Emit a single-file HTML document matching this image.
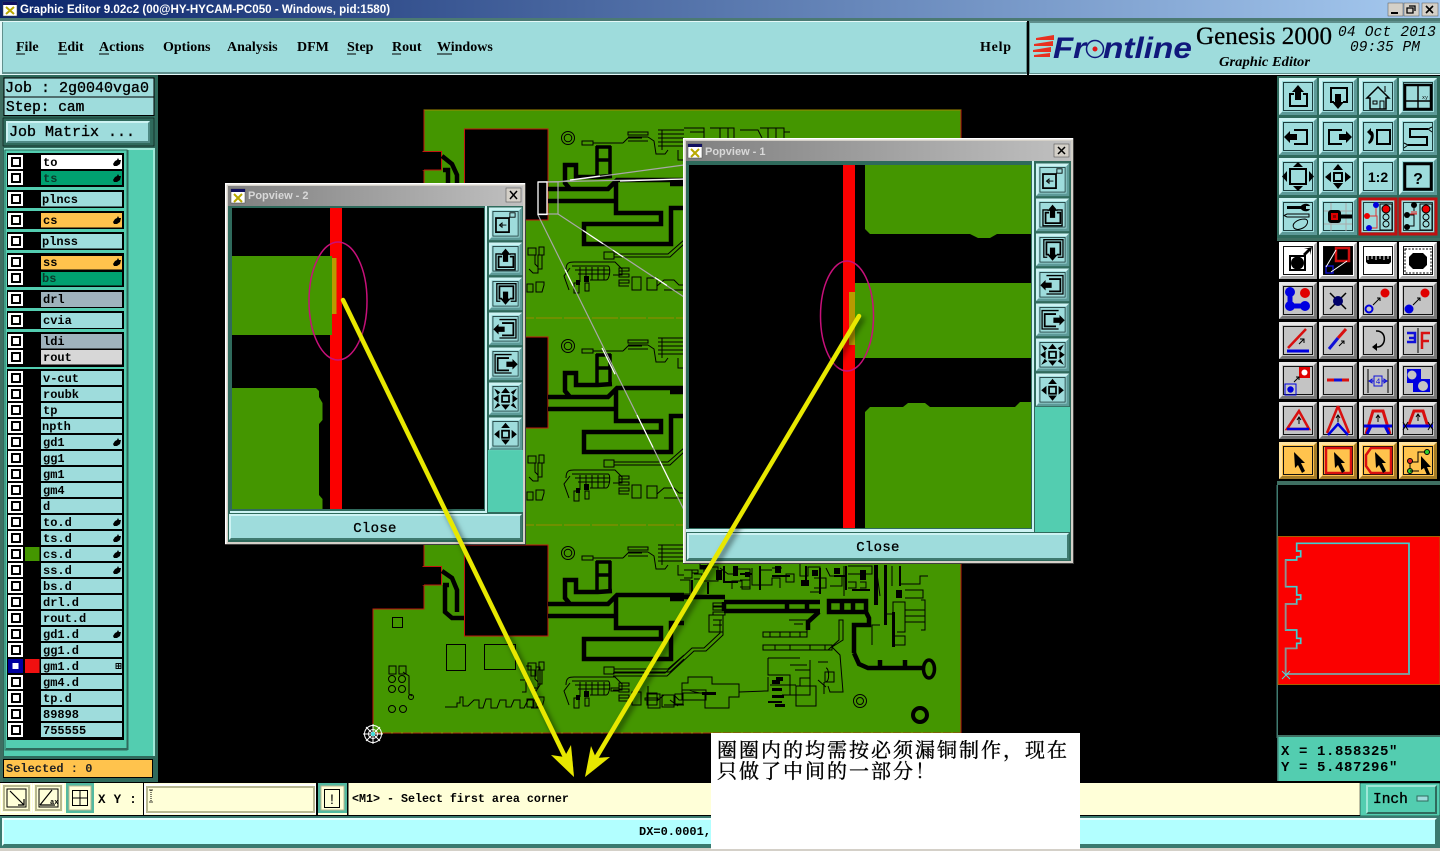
<!DOCTYPE html>
<html><head><meta charset="utf-8"><title>Graphic Editor</title>
<style>
html,body{margin:0;padding:0;background:#000;width:1440px;height:851px;overflow:hidden}
svg{display:block;position:absolute;left:0;top:0}
.m{font-family:"Liberation Mono",monospace;font-weight:bold;fill:#000}
.l{font-size:12px}
.s{font-family:"Liberation Serif",serif;font-weight:bold;font-size:14px;fill:#000}
.t{font-family:"Liberation Sans",sans-serif;font-weight:bold;font-size:11px}
.n{font-family:"Liberation Serif","Noto Serif CJK SC",serif;font-size:20px;letter-spacing:2px;fill:#000;stroke:#000;stroke-width:.35}
.k{fill:none;stroke:#000;stroke-width:2}
.th{fill:none;stroke:#000;stroke-width:4.5;stroke-linejoin:miter}
.tn{fill:none;stroke:#000;stroke-width:1}
</style></head><body>
<svg width="1440" height="851" viewBox="0 0 1440 851" xmlns="http://www.w3.org/2000/svg">
<defs>
<linearGradient id="tb" x1="0" x2="1" y1="0" y2="0"><stop offset="0" stop-color="#0a246a"/><stop offset="1" stop-color="#a6caf0"/></linearGradient>
<linearGradient id="tg" x1="0" x2="1" y1="0" y2="0"><stop offset="0" stop-color="#808080"/><stop offset="1" stop-color="#c0c0c0"/></linearGradient>
<filter id="sh" x="-10%" y="-10%" width="120%" height="120%"><feDropShadow dx="3" dy="3" stdDeviation="3" flood-color="#000" flood-opacity=".55"/></filter>

<g id="cb"><rect width="15" height="14" fill="#fff"/><rect x="3" y="2" width="10" height="10" fill="#000"/><rect x="5" y="4" width="6" height="6" fill="#fff"/></g>
<path id="hand" d="M0 6L2 3L4 2L5 0L6 2H8L7 6L4 8H1Z" fill="#000"/>

<g id="bT"><rect width="38" height="37" fill="#cdf3f3"/><path d="M38 0V37H0L3 34H35V3Z" fill="#5d9a98"/><rect x="3" y="3" width="32" height="31" fill="#9edcdc"/><rect x="4.5" y="4.5" width="29" height="28" fill="none" stroke="#1d3d3d"/></g>
<g id="bW"><rect width="38" height="37" fill="#fff"/><path d="M38 0V37H0L3 34H35V3Z" fill="#a8a8a8"/><rect x="3" y="3" width="32" height="31" fill="#fff"/><rect x="4.5" y="4.5" width="29" height="28" fill="none" stroke="#111"/></g>
<g id="bG"><rect width="38" height="37" fill="#e8e8e8"/><path d="M38 0V37H0L3 34H35V3Z" fill="#777"/><rect x="3" y="3" width="32" height="31" fill="#c4c4c4"/><rect x="4.5" y="4.5" width="29" height="28" fill="none" stroke="#111"/></g>
<g id="bO"><rect width="38" height="37" fill="#ffe3a0"/><path d="M38 0V37H0L3 34H35V3Z" fill="#a47c28"/><rect x="3" y="3" width="32" height="31" fill="#ffc34d"/><rect x="4.5" y="4.5" width="29" height="28" fill="none" stroke="#111"/></g>

<g id="iUp"><path class="k" d="M15 16H11V28H28V16H24"/><path d="M19 7L25 14H22V22H16V14H13Z"/></g>
<g id="iDn"><path class="k" d="M15 24H12V10H28V24H24"/><path d="M16 16H22V24H25L19 31L13 24H16Z"/></g>
<g id="iHm"><path d="M19 9L8 20H11V31H27V20H30Z" fill="none" stroke="#000" stroke-width="1.5"/><path class="tn" d="M14 23h4v3h-4zM21 23h4v8h-4zM26 8v6"/></g>
<g id="iWn"><rect x="6" y="7" width="26" height="24" fill="none" stroke="#000" stroke-width="2.5"/><path d="M19 7V31M6 23H32" stroke="#000" stroke-width="1.4"/><text x="23" y="21" font-size="5" font-family="Liberation Mono">xy</text></g>
<g id="iLf"><path class="k" d="M15 12H28V26H15"/><path d="M5 19L11 13V16H18V22H11V25Z"/></g>
<g id="iRt"><path class="k" d="M23 12H10V26H23"/><path d="M33 19L27 13V16H20V22H27V25Z"/></g>
<g id="iBk"><rect x="18" y="12" width="13" height="14" class="k"/><path d="M8 14L12 10V13C16 13 16 24 10 26L9 24C12 22 12 16 12 16V18Z"/></g>
<g id="iS"><path class="k" d="M29 11H11V19H28V27H9"/><path class="tn" d="M33 9L29 11L33 14M5 25L9 27L5 30"/></g>
<g id="iEx"><rect x="11" y="11" width="16" height="15" class="k"/><path d="M19 4L24 9H14ZM19 33L24 28H14ZM3 18.5L8 13V24ZM35 18.5L30 13V24Z"/></g>
<g id="iSh"><rect x="15" y="15" width="8" height="8" class="k"/><path d="M19 6L24 12H14ZM19 31L24 25H14ZM6 19L12 14V24ZM32 19L26 14V24Z"/></g>
<g id="iEp"><rect x="15" y="15" width="8" height="7" class="k"/><path d="M6 7L13 11L10 14ZM32 7L25 11L28 14ZM6 30L13 26L10 23ZM32 30L25 26L28 23ZM19 6L24 12H14ZM19 31L24 25H14ZM5 18.500L11 14V23ZM33 18.500L27 14V23Z"/></g>
<g id="i12"><text x="19" y="24" text-anchor="middle" font-family="Liberation Sans" font-weight="bold" font-size="14">1:2</text></g>
<g id="iQ"><rect x="6" y="6" width="26" height="25" fill="none" stroke="#000" stroke-width="2.5"/><text x="19" y="26" text-anchor="middle" font-family="Liberation Sans" font-weight="bold" font-size="16">?</text></g>
<g id="iTl"><path d="M8 8H22C24 5 30 5 31 8H27V11H31C30 14 24 14 22 11H8Z"/><path class="tn" d="M8 16H30V19H8L5 17.5ZM15 30C12 26 18 21 26 21C31 22 28 28 24 30C20 32 17 32 15 30Z"/></g>
<g id="iKy"><path d="M5 13H33M5 26H33M12 5V33M27 5V33" stroke="#aaa" fill="none"/><rect x="9" y="12" width="13" height="13" rx="3"/><rect x="12" y="15" width="7" height="7" fill="#d00"/><rect x="14" y="17" width="3" height="3" fill="#800"/><rect x="20" y="16.5" width="13" height="4"/></g>
<g id="iSa"><rect x="1" y="1" width="36" height="35" fill="none" stroke="#c01010" stroke-width="3"/><rect x="21" y="6" width="12" height="26" fill="none" stroke="#000"/><circle cx="27" cy="11" r="4" fill="#e00" stroke="#000"/><circle cx="27" cy="19" r="3" fill="none" stroke="#000"/><circle cx="27" cy="26" r="3" fill="none" stroke="#000"/><path d="M17 8V18H8M8 18H18V30H10" fill="none" stroke="#e03030"/><circle cx="17" cy="7" r="3" fill="#00d"/><circle cx="8" cy="18" r="3" fill="#e00"/><circle cx="10" cy="30" r="3" fill="#00d"/></g>
<g id="iSb"><rect x="1" y="1" width="36" height="35" fill="none" stroke="#c01010" stroke-width="3"/><rect x="21" y="6" width="12" height="26" fill="none" stroke="#000"/><circle cx="27" cy="11" r="4" fill="#e00" stroke="#000"/><circle cx="27" cy="19" r="3" fill="none" stroke="#000"/><circle cx="27" cy="26" r="3" fill="none" stroke="#000"/><path d="M15 8V28H8M8 17H15" fill="none" stroke="#000"/><path d="M11 16h7M13 13v3M15 13v3M17 13v3" stroke="#d22" fill="none"/><circle cx="15" cy="7" r="3"/><circle cx="8" cy="17" r="3"/><circle cx="8" cy="29" r="3"/></g>

<g id="a1"><rect x="11" y="14" width="15" height="14" class="k"/><circle cx="18.5" cy="21" r="6.5"/><path d="M24 12L29 7H25L33 5L31 13V9L26 14" /></g>
<g id="a2"><rect x="4.5" y="4.5" width="29" height="28" fill="#000"/><rect x="17" y="6" width="13" height="13" fill="none" stroke="#d01010" stroke-width="2.5"/><rect x="7" y="24" width="7" height="7" fill="none" stroke="#1010c0" stroke-width="1.5"/><path d="M7 25L17 8M12 30L28 19" stroke="#fff" fill="none"/></g>
<g id="a3"><path d="M7 14H32V20L30 22H9L7 20Z"/><path d="M9 13v5M13 13v4M17 13v5M21 13v4M25 13v5M29 13v4" stroke="#fff"/></g>
<g id="a4"><rect x="6" y="7" width="26" height="24" fill="none" stroke="#000" stroke-dasharray="2 1.5"/><path d="M14 11H24L28 15V23L24 27H14L10 23V15Z"/></g>
<g id="b1"><path d="M11 10V24H26" stroke="#0000e0" stroke-width="5" fill="none"/><circle cx="11" cy="10" r="5" fill="#0000e0"/><circle cx="11" cy="24" r="5" fill="#0000e0"/><circle cx="26" cy="24" r="5" fill="#0000e0"/><circle cx="26" cy="11" r="5" fill="#e00000"/></g>
<g id="b2"><path d="M11 11L27 27M27 11L11 27" stroke="#000" stroke-width="1.5"/><circle cx="19" cy="19" r="5" fill="#00006a"/></g>
<g id="b3"><circle cx="26" cy="11" r="4.5" fill="#e00000"/><circle cx="10" cy="27" r="3.5" fill="none" stroke="#0000e0" stroke-width="2"/><path class="tn" d="M14 23L21 16M18 16H21V19"/></g>
<g id="b4"><circle cx="26" cy="11" r="4.5" fill="#e00000"/><circle cx="10" cy="27" r="4.5" fill="#0000e0"/><path class="tn" d="M14 23L21 16M18 16H21V19"/></g>
<g id="c1"><path d="M9 26L27 7" stroke="#d81010" stroke-width="2.5"/><path d="M8 29H30" stroke="#0000e0" stroke-width="3"/><path class="tn" d="M20 22L25 17M21 17H25V21"/></g>
<g id="c2"><path d="M19 16L27 7" stroke="#d81010" stroke-width="3"/><path d="M19 16L10 27" stroke="#1010d8" stroke-width="3"/><path class="tn" d="M20 24L25 19M22 19H25V22"/></g>
<g id="c3"><path d="M17 9C28 8 28 25 18 25" fill="none" stroke="#000" stroke-width="1.5"/><path d="M13 25L18 21V29Z"/></g>
<g id="c4"><path d="M8 11H16V20H8M10 16H16" fill="none" stroke="#1010d8" stroke-width="2.5"/><path d="M19 6V31" stroke="#000"/><path d="M31 11H23V27M23 19H30" fill="none" stroke="#d81010" stroke-width="2.5"/></g>
<g id="d1"><rect x="20" y="5" width="11" height="11" fill="#e00000"/><circle cx="25.5" cy="10.5" r="3" fill="#fff"/><rect x="6" y="22" width="11" height="11" fill="none" stroke="#0000e0"/><circle cx="11.5" cy="27.5" r="3.2" fill="#0000e0"/><path class="tn" d="M15 20L20 15M17 15H20V18"/></g>
<g id="d2"><path d="M8 18H30" stroke="#d81010" stroke-width="3"/><path d="M15 18H23" stroke="#1010d8" stroke-width="3"/></g>
<g id="d3"><path class="tn" d="M9 7V31M29 7V31"/><path d="M10 19H28M10 19L13 17V21ZM28 19L25 17V21Z" stroke="#1010d8" fill="none"/><rect x="15" y="14" width="8" height="10" fill="#c4c4c4" stroke="#1010d8"/><text x="19" y="22" text-anchor="middle" font-size="8" fill="#1010d8" font-family="Liberation Mono">4</text></g>
<g id="d4"><path d="M8 7H22V17H31V30H14V21H8Z" fill="#0000e0"/><circle cx="13" cy="13" r="4.5" fill="#c4c4c4"/><circle cx="24" cy="24" r="5" fill="#c4c4c4"/></g>
<g id="e1"><path d="M20 9L8 27H30Z" fill="none" stroke="#d81010" stroke-width="2.5"/><path d="M8 27H30" stroke="#0000e0" stroke-width="2.5"/><path class="tn" d="M20 15V22M18 18L20 15L22 18"/></g>
<g id="e2"><path d="M19 4L8 31M19 4L30 31" fill="none" stroke="#d81010" stroke-width="2.5"/><path d="M9 33L19 22L29 33" fill="none" stroke="#0000e0" stroke-width="2.5"/><path class="tn" d="M19 13V20M17 16L19 13L21 16"/></g>
<g id="e3"><path d="M7 32L14 9H24L31 32" fill="none" stroke="#d81010" stroke-width="3"/><path d="M5 24H33" stroke="#0000e0" stroke-width="3"/><path d="M8 32L12 24M30 32L26 24" stroke="#0000e0" stroke-width="3"/><path class="tn" d="M19 13V20M17 16L19 13L21 16"/></g>
<g id="e4"><path d="M9 25L15 9H24L29 25" fill="none" stroke="#d81010" stroke-width="3"/><path d="M4 24H34" stroke="#0000e0" stroke-width="3"/><path class="tn" d="M19 12V19M17 15L19 12L21 15M4 20L9 28M9 20L4 28M29 20L34 28M34 20L29 28"/></g>
<g id="f0"><path d="M15 10L26 21L22 21L26 29L23 31L19 23L16 26Z"/></g>
<g id="f1"><rect x="7" y="6" width="25" height="25" fill="none" stroke="#d81010" stroke-width="2.5"/><use href="#f0"/></g>
<g id="f2"><path d="M12 6H32V31H12L7 24V13Z" fill="none" stroke="#d81010" stroke-width="2.5"/><use href="#f0" transform="translate(1,0)"/></g>
<g id="f3"><path class="tn" d="M11 28V20H19V10H28"/><circle cx="28" cy="10" r="2.5" fill="#30d030" stroke="#000"/><circle cx="11" cy="19" r="2.5" fill="#e02020" stroke="#000"/><circle cx="11" cy="29" r="2.5" fill="#30d030" stroke="#000"/><path class="tn" d="M11 29H20"/><path d="M22 14L32 25L28 25L31 32L28 33L25 26L22 28Z"/></g>

<g id="p0"><use href="#bT"/><rect x="8" y="12" width="15" height="16" class="k"/><path d="M12 20h8M12 20l3-2.500v5z" stroke="#000" stroke-width="1" fill="none"/><path class="tn" d="M23 11h7v-5h-6v5"/></g>
<g id="p1"><use href="#bT"/><use href="#iUp"/><path d="M14 13H8V31H30V13H24" fill="none" stroke="#000" stroke-width="1.500"/></g>
<g id="p2"><use href="#bT"/><use href="#iDn"/><path d="M13 27H9V7H31V27H25" fill="none" stroke="#000" stroke-width="1.500"/></g>
<g id="p3"><use href="#bT"/><use href="#iLf"/><path d="M12 8H31V29H12" fill="none" stroke="#000" stroke-width="1.500"/></g>
<g id="p4"><use href="#bT"/><use href="#iRt"/><path d="M26 8H7V29H26" fill="none" stroke="#000" stroke-width="1.500"/></g>
<g id="p5"><use href="#bT"/><use href="#iEp"/></g>
<g id="p6"><use href="#bT"/><use href="#iSh"/></g>

<!-- repeating PCB cell -->
<g id="cell">
<circle cx="568" cy="138" r="6.5" class="tn"/><circle cx="568" cy="138" r="3.8" class="tn"/>
<path class="tn" d="M582 141h11v4h-11zM593 143H623M623 143l5-5h14M628 132h20v3h-20zM628 137h20M628 141h20M648 137l6 4 2 13h9l3-4M658 130h26M658 134h26M658 138h26M658 142h26M658 146h26M662 130v20M678 150v10h6"/>
<path class="th" style="stroke-width:3.500" d="M597 146V175M610 146V177M596 147H611M597 160H611"/>
<path class="th" d="M548 189H608L617 180H684M570 189L565 183V165H576V177H598L612 176M548 201H616M616 180V213H661V224H584V244H671V208H684M670 184H684"/>
<path class="tn" d="M604 252h10v7h-10zM614 254H668L684 240M614 257H670L684 244"/>
<path class="tn" d="M566 270C566 262 570 262 574 262H615L622 269V275H613M572 266H608C611 266 610 280 606 280H590M570 268L564 276L569 290M575 270H610M578 274H610M580 267v15M586 267v13M592 267v13M598 267v13M604 267v13M574 283h5v10h-5zM585 283h4v8h-4z"/>
<path d="M584 276h5v6h-5zM576 280h4v5h-4z"/>
<path class="tn" d="M619 268h10v3h-10zM619 274h10v3h-10zM619 280h10v3h-10zM619 271v3h9M619 283v3h10M632 277h9v13h-9zM647 278h10v12h-10zM657 286l7-6h10l5 5h5M664 290h20"/>
<path class="tn" d="M528 248h8v7h-8zM533 255h2v9l3 3v6h-5l-4-4M539 247h5v8h-5zM538 255h4v14h-4zM527 284h6v8h-6zM536 282h8v3l-2 7h-6z"/>
</g>
</defs>

<!-- base -->
<rect width="1440" height="851" fill="#000"/>
<rect width="1440" height="18" fill="url(#tb)"/>
<rect x="0" y="18" width="1440" height="3" fill="#4b7a74"/>
<rect x="3" y="2" width="14" height="14" fill="#fff" stroke="#444" stroke-width=".5"/><rect x="3" y="2" width="14" height="3" fill="#101060"/><path d="M6 7L14 14M14 7L6 14" stroke="#b8a800" stroke-width="2"/>
<text class="t" x="20" y="13" fill="#fff" style="font-size:11.6px">Graphic Editor 9.02c2 (00@HY-HYCAM-PC050 - Windows, pid:1580)</text>
<g><rect x="1388" y="3" width="15" height="13" fill="#d4d0c8" stroke="#555" stroke-width=".5"/><path d="M1391 13h7" stroke="#000" stroke-width="2"/><rect x="1404" y="3" width="15" height="13" fill="#d4d0c8" stroke="#555" stroke-width=".5"/><path d="M1409 6h6v5M1407 8h6v5h-6z" fill="none" stroke="#000" stroke-width="1.3"/><rect x="1422" y="3" width="16" height="13" fill="#d4d0c8" stroke="#555" stroke-width=".5"/><path d="M1426 6l7 7M1433 6l-7 7" stroke="#000" stroke-width="1.6"/></g>

<!-- menu bar -->
<rect x="0" y="21" width="1440" height="54" fill="#e4f8f8"/>
<rect x="2" y="22" width="1025" height="52" fill="#5f8f8c"/>
<rect x="3" y="22" width="1023" height="50" fill="#9edcdc"/>
<rect x="1027" y="21" width="2" height="54" fill="#000"/>
<rect x="1029" y="21" width="411" height="53" fill="#5f8f8c"/>
<rect x="1030" y="23" width="410" height="50" fill="#9edcdc"/>
<text class="s" x="16" y="51">File</text><text class="s" x="58" y="51">Edit</text><text class="s" x="99" y="51">Actions</text><text class="s" x="163" y="51">Options</text><text class="s" x="227" y="51">Analysis</text><text class="s" x="297" y="51">DFM</text><text class="s" x="347" y="51">Step</text><text class="s" x="392" y="51">Rout</text><text class="s" x="437" y="51">Windows</text><text class="s" x="980" y="51" textLength="31">Help</text>
<path d="M16 54h9M58 54h9M99 54h10M347 54h9M392 54h9M437 54h15" stroke="#000" stroke-width="1"/>
<path d="M1054 35L1036 38V40H1054ZM1053 41L1034 44V46H1053ZM1051 47L1033 50V52H1051ZM1050 53L1034 55V57H1050Z" fill="#e83020"/>
<text x="1053" y="58" font-family="Liberation Sans" font-weight="bold" font-style="italic" font-size="30" fill="#10187c" textLength="33" lengthAdjust="spacingAndGlyphs">Fr</text>
<circle cx="1095" cy="49" r="8.500" fill="none" stroke="#10187c" stroke-width="1.500"/>
<circle cx="1095" cy="49" r="2.500" fill="#e01818"/>
<text x="1103" y="58" font-family="Liberation Sans" font-weight="bold" font-style="italic" font-size="30" fill="#10187c" textLength="89" lengthAdjust="spacingAndGlyphs">ntline</text>
<text x="1196" y="44" font-family="Liberation Serif" font-size="25" fill="#000" stroke="#000" stroke-width=".25" textLength="136" lengthAdjust="spacingAndGlyphs">Genesis 2000</text>
<text x="1219" y="66" font-family="Liberation Serif" font-weight="bold" font-style="italic" font-size="13.5" fill="#000" textLength="91" lengthAdjust="spacingAndGlyphs">Graphic Editor</text>
<text x="1338" y="36" class="m" style="font-style:italic;font-weight:normal;font-size:14.5px;letter-spacing:.2px" textLength="98">04 Oct 2013</text>
<text x="1350" y="51" class="m" style="font-style:italic;font-weight:normal;font-size:14.5px" textLength="70">09:35 PM</text>

<!-- PCB -->
<path d="M424 110H961V733H373V609H424Z" fill="#449600" stroke="#a08a00" stroke-width="1"/>
<path d="M424 110V151M424 170V358M424 377V566M424 585V609H373V733M961 110V733" fill="none" stroke="#c01810" stroke-width="1"/>
<path d="M373 733H961" stroke="#b03010" stroke-width="1" stroke-dasharray="8 2"/>
<path d="M423 151.500H441.500V170H423Z M423 358.500H441.500V377H423Z M423 566.500H441.500V585H423Z" fill="#000" stroke="#c01810"/>
<rect x="420" y="152" width="4" height="18" fill="#000"/><rect x="420" y="359" width="4" height="18" fill="#000"/><rect x="420" y="567" width="4" height="18" fill="#000"/>
<g fill="#000" stroke="#c01810" stroke-width="1"><rect x="464.500" y="129" width="83.500" height="91"/><rect x="464.500" y="337" width="83.500" height="91"/><rect x="464.500" y="545" width="83.500" height="91"/></g>
<path d="M424 318H684M424 525H684" stroke="#9a8a00" stroke-dasharray="26 2"/>
<use href="#cell"/>
<use href="#cell" y="208"/>
<use href="#cell" y="415"/>
<!-- left traces -->
<path class="th" d="M442 156L452 164L457 175V183M443 170H448V183"/>
<path class="th" d="M442 571L452 578L457 590V612M445 585V612L452 618L464 618M443 585H449"/>
<!-- lower left -->
<path class="tn" d="M392.500 617.500h10v10h-10zM446.500 644.500h19v26h-19zM484.500 644.500h31v25h-31z"/>
<path class="tn" d="M389 666h7v8h-7zM399 666h7v8h-7zM403 672l6 4v18l3 2"/>
<circle class="tn" cx="392" cy="679" r="3.500"/><circle class="tn" cx="402" cy="679" r="3.500"/><circle class="tn" cx="392" cy="689" r="3.500"/><circle class="tn" cx="402" cy="689" r="3.500"/><circle class="tn" cx="392" cy="709" r="3.500"/><circle class="tn" cx="403" cy="709" r="3.500"/><circle class="tn" cx="411" cy="697" r="2.500"/>
<path class="tn" d="M445 707h12v-4h3v-6h3v9h5l6-6h5v8h4l3-9h5v9h6l3-8h6v7h5l3-7h6v8h4l4-8h10v8h-7M534 700v8"/>
<path class="tn" d="M526 666h5v10h5v-9h4v18l-4 6-6-3M520 680h6v12h-4"/>
<!-- right of third cell -->
<path class="th" d="M724 602H820M724 611H820M787 602V611M807 602V611M724 602V611"/>
<path class="th" d="M829 601H866V612H829ZM842 601V612M853 601V612M866 612L869 618V625H854V653"/>
<path class="th" d="M819 612L808 622V630M684 597H725"/>
<path class="th" d="M854 653L859 664L868 668H925M880 660V668M905 660V668"/>
<ellipse cx="929" cy="669" rx="5.500" ry="9" fill="none" stroke="#000" stroke-width="3.500"/>
<circle cx="920" cy="715" r="7" fill="none" stroke="#000" stroke-width="4"/>
<circle cx="860" cy="701" r="6.500" class="tn"/><circle cx="860" cy="701" r="3.500" class="tn"/>
<path class="tn" d="M713 603h12v3h-12zM713 607h12v3h-12zM713 612h12v3h-12zM709 615h14v17h-14zM713 620h9M713 625h9"/>
<path class="tn" d="M763 632h44v5h-44zM763 645h69v5h-69zM770 632v5M780 632v5M790 632v5M800 632v5M775 645v5M790 645v5M810 645v5M825 645v5M789 620h18v12h-3M794 624h9"/>
<path class="tn" d="M613 673H665L692 648H704L720 633V620M613 676H667L694 651H706L723 635V620"/>
<path class="tn" d="M832 647L843 640V620h-4v20L828 650M832 647L840 655L843 692H830L828 686"/>
<path class="tn" d="M682 692V683H688V677H712V684H739V697H729V708H705V693H682ZM739 692L765 691H768V677M768 658H800M768 658V675H790V695H810V660M795 670H810M790 665H807M800 678h10v8h-10zM818 662h10M826 668C829 668 830 680 826 682M818 680l8 7M825 672h9v10h-9zM824 682v12M794 685h-10"/>
<path class="tn" d="M796 686h20v20h-20zM770 685H796M782 695h14"/>
<path d="M772 680h8v4h-8zM772 688h10v3h-10zM772 695h12v3h-12zM768 701h14v2h-14zM775 704h10v3h-10zM776 677h7v4h-7z"/>
<path class="tn" d="M645 698h13v2h-13zM648 686v14M611 688h8v3h-8zM648 694h12v14h-12zM662 695h12v12h-12zM675 694h8v10h-8zM682 690h24v10h-24zM670 700l8 6"/>
<path d="M688 690l8 3h6M702 692h14v3h-14z"/>
<path class="tn" d="M684 570h8v8h-8M692 570h6v3h-6M694 574h8v5h-8M680 580h10v14h-10M700 563h8v6h-8zM704 567h14v14h-14zM720 568l8 6h8v-5h14v20h-8v-8h-10v8M740 580h10v7h-10M752 568v17h20v-7h8v10M760 570h12M772 568h10M786 574h8v8h-8zM800 564v12h8v-9h12v25h-10M814 578h12v10h-12M826 568l4 8h12v10h-12M844 566v30M848 566h24v8h-24M848 582h8v6h-8M860 582h6v6h-6M876 566l4 30M885 566v48h8v-12h12v30h-8M892 566v20M900 566v18h20v-8h8M905 590h18v8h-18M921 600h4v30h-4M905 610h20M905 616h20M905 622h20M893 636h12v9h-12M880 625h-8v20"/>
<path d="M700 565h8v4h-8zM716 570h6v10h-6zM733 566h5v10h-5zM745 572h5v5h-5zM775 566h6v7h-6zM801 580h8v6h-8zM812 570h6v6h-6zM834 568h6v6h-6zM860 570h6v10h-6zM874 565h4v40h-4zM884 565h3v60h-3zM896 590h6v8h-6zM892 612h3v35h-3z"/>
<path fill="none" stroke="#000" stroke-width="2" d="M724 566V582H738M740 574H752M760 566V590M772 576H790M806 566V580M820 568V594M834 576H845M846 566V590M852 590H870M900 566V586M692 580V596M708 582V594"/>
<path class="tn" d="M684 128h20v10M690 132h14M710 128h24v10M720 128v10M728 128v10M740 130h18l4 8M760 128h24v10M768 128v10M776 128v10M790 132h-6"/>
<!-- zoom box lines -->
<path d="M558 182H538M558 182V214H538" fill="none" stroke="#a8a8a8" stroke-width="1.200"/>
<path d="M558 182L684 165M558 214L684 297M538 215L684 510M538 182L684 179" stroke="#a8a8a8" stroke-width="1.200" fill="none"/>
<path d="M538 182H547V214.500H538Z" fill="none" stroke="#fff" stroke-width="1.300"/>
<path d="M570 180L600 176M620 181L684 179" stroke="#fff" stroke-width="1.200" fill="none"/>
<path d="M583 230.500L603 243.700M613 250.300L623 257M655 277.500L667 285.500M565 269.500L573 285.800M602 348L615 374.200M637 415L653 447.500M660 461.500L677 496" stroke="#fff" stroke-width="1.200" fill="none"/>
<!-- cursor -->
<g stroke="#fff" fill="none"><circle cx="373" cy="734" r="8.500"/><circle cx="373" cy="734" r="4.500"/><path d="M363 734H383M373 724V744M366 727L380 741M380 727L366 741"/><circle cx="373" cy="734" r="1.500" fill="#40e0e0" stroke="#40e0e0"/></g>

<!-- left panel -->
<rect x="0" y="75" width="158" height="708" fill="#2f6a5c"/>
<rect x="0" y="75" width="3" height="708" fill="#3f6f62"/>
<rect x="4" y="78" width="150" height="19" fill="#9edcdc" stroke="#000"/>
<rect x="4" y="97" width="150" height="18.500" fill="#9edcdc" stroke="#000"/>
<text class="m" x="5" y="92" style="font-size:15px;font-weight:normal;stroke:#000;stroke-width:.35">Job : 2g0040vga0</text>
<text class="m" x="6" y="111" style="font-size:14.5px;font-weight:normal;stroke:#000;stroke-width:.35">Step: cam</text>
<rect x="3" y="118" width="151" height="28" fill="#2f6a5c" stroke="#000" stroke-width=".5"/>
<rect x="6" y="121" width="144" height="22" fill="#cdf3f3"/><path d="M150 121V143H6L8 141H148V123Z" fill="#4f8a85"/><rect x="8" y="123" width="140" height="18" fill="#9edcdc"/>
<text class="m" x="9" y="136" style="font-size:15px;font-weight:normal;stroke:#000;stroke-width:.35">Job Matrix ...</text>
<rect x="4" y="148" width="151" height="608" fill="#53cdb0"/>
<rect x="4" y="148" width="151" height="2" fill="#9ee8d8"/>
<rect x="153" y="148" width="2" height="608" fill="#9ee8d8"/>
<rect x="126.500" y="150" width="2" height="600" fill="#2f6a5c"/>
<rect x="5" y="150" width="122" height="600" fill="#53cdb0" stroke="#2f6a5c"/>
<rect x="6" y="748" width="122" height="2" fill="#2f6a5c"/>

<g fill="#000">
<rect x="7" y="153" width="117" height="34"/><rect x="7" y="190" width="117" height="18"/><rect x="7" y="211" width="117" height="18"/><rect x="7" y="232" width="117" height="18"/><rect x="7" y="253" width="117" height="34"/><rect x="7" y="290" width="117" height="18"/><rect x="7" y="311" width="117" height="18"/><rect x="7" y="332" width="117" height="35"/><rect x="7" y="369" width="117" height="371"/>
</g>
<!-- rows -->
<g fill="#9edcdc">
<rect x="41" y="155" width="81" height="14" fill="#fff"/><rect x="41" y="171" width="81" height="14" fill="#00a070"/>
<rect x="41" y="192" width="81" height="14.500"/><rect x="41" y="213" width="81" height="14.500" fill="#ffc34d"/><rect x="41" y="234" width="81" height="14.500"/>
<rect x="41" y="256" width="81" height="13.500" fill="#ffc34d"/><rect x="41" y="272" width="81" height="13.500" fill="#00a070"/>
<rect x="41" y="292" width="81" height="15" fill="#9fb3bd"/><rect x="41" y="313" width="81" height="15"/>
<rect x="41" y="334" width="81" height="14.500" fill="#9fb3bd"/><rect x="41" y="350" width="81" height="14.500" fill="#d7d7d7"/>
<rect x="41" y="371" width="81" height="14"/><rect x="41" y="387" width="81" height="14"/><rect x="41" y="403" width="81" height="14"/><rect x="41" y="419" width="81" height="14"/><rect x="41" y="435" width="81" height="14"/><rect x="41" y="451" width="81" height="14"/><rect x="41" y="467" width="81" height="14"/><rect x="41" y="483" width="81" height="14"/><rect x="41" y="499" width="81" height="14"/><rect x="41" y="515" width="81" height="14"/><rect x="41" y="531" width="81" height="14"/><rect x="41" y="547" width="81" height="14"/><rect x="41" y="563" width="81" height="14"/><rect x="41" y="579" width="81" height="14"/><rect x="41" y="595" width="81" height="14"/><rect x="41" y="611" width="81" height="14"/><rect x="41" y="627" width="81" height="14"/><rect x="41" y="643" width="81" height="14"/><rect x="41" y="659" width="81" height="14"/><rect x="41" y="675" width="81" height="14"/><rect x="41" y="691" width="81" height="14"/><rect x="41" y="707" width="81" height="14"/><rect x="41" y="723" width="81" height="14"/>
</g>
<rect x="25" y="547" width="14.500" height="14" fill="#449600"/><rect x="25" y="659" width="14.500" height="14" fill="#f01010"/>
<g>
<use href="#cb" x="8" y="155"/><use href="#cb" x="8" y="171"/><use href="#cb" x="8" y="192"/><use href="#cb" x="8" y="213"/><use href="#cb" x="8" y="234"/><use href="#cb" x="8" y="255"/><use href="#cb" x="8" y="271"/><use href="#cb" x="8" y="292"/><use href="#cb" x="8" y="313"/><use href="#cb" x="8" y="334"/><use href="#cb" x="8" y="350"/><use href="#cb" x="8" y="371"/><use href="#cb" x="8" y="387"/><use href="#cb" x="8" y="403"/><use href="#cb" x="8" y="419"/><use href="#cb" x="8" y="435"/><use href="#cb" x="8" y="451"/><use href="#cb" x="8" y="467"/><use href="#cb" x="8" y="483"/><use href="#cb" x="8" y="499"/><use href="#cb" x="8" y="515"/><use href="#cb" x="8" y="531"/><use href="#cb" x="8" y="547"/><use href="#cb" x="8" y="563"/><use href="#cb" x="8" y="579"/><use href="#cb" x="8" y="595"/><use href="#cb" x="8" y="611"/><use href="#cb" x="8" y="627"/><use href="#cb" x="8" y="643"/>
<rect x="8" y="659" width="15" height="14" fill="#0000a0"/><rect x="12.500" y="663" width="6" height="6" fill="#fff"/>
<use href="#cb" x="8" y="675"/><use href="#cb" x="8" y="691"/><use href="#cb" x="8" y="707"/><use href="#cb" x="8" y="723"/>
</g>
<g class="m l">
<text x="43" y="166">to</text><text x="43" y="182" style="fill:#0c3a2c">ts</text><text x="42" y="203">plncs</text><text x="43" y="224">cs</text><text x="42" y="245">plnss</text><text x="43" y="266">ss</text><text x="42" y="282" style="fill:#0c3a2c">bs</text><text x="43" y="303">drl</text><text x="43" y="324">cvia</text><text x="43" y="345">ldi</text><text x="43" y="361">rout</text>
<text x="43" y="382">v-cut</text><text x="43" y="398">roubk</text><text x="43" y="414">tp</text><text x="42" y="430">npth</text><text x="43" y="446">gd1</text><text x="43" y="462">gg1</text><text x="43" y="478">gm1</text><text x="43" y="494">gm4</text><text x="43" y="510">d</text><text x="43" y="526">to.d</text><text x="43" y="542">ts.d</text><text x="43" y="558">cs.d</text><text x="43" y="574">ss.d</text><text x="43" y="590">bs.d</text><text x="43" y="606">drl.d</text><text x="43" y="622">rout.d</text><text x="43" y="638">gd1.d</text><text x="43" y="654">gg1.d</text><text x="43" y="670">gm1.d</text><text x="43" y="686">gm4.d</text><text x="43" y="702">tp.d</text><text x="43" y="718">89898</text><text x="43" y="734">755555</text>
</g>
<g>
<use href="#hand" x="113" y="158"/><use href="#hand" x="113" y="174"/><use href="#hand" x="113" y="216"/><use href="#hand" x="113" y="258"/><use href="#hand" x="113" y="438"/><use href="#hand" x="113" y="518"/><use href="#hand" x="113" y="534"/><use href="#hand" x="113" y="550"/><use href="#hand" x="113" y="566"/><use href="#hand" x="113" y="630"/>
<path d="M116 663.500h5v5h-5zM118.500 663.500v5M116 666h5" fill="none" stroke="#000" stroke-width=".9"/>
</g>
<rect x="3.500" y="759.500" width="149" height="18" fill="#ffc34d" stroke="#000"/>
<text class="m" x="6" y="772" style="font-size:12px;fill:#222">Selected : 0</text>

<!-- right toolbar -->
<rect x="1277" y="76" width="163" height="162" fill="#2f6a5c"/>
<rect x="1277" y="238" width="163" height="3" fill="#3f6f62"/>
<g>
<g transform="translate(1279,78)"><use href="#bT"/><use href="#iUp"/></g><g transform="translate(1319,78)"><use href="#bT"/><use href="#iDn"/></g><g transform="translate(1359,78)"><use href="#bT"/><use href="#iHm"/></g><g transform="translate(1399,78)"><use href="#bT"/><use href="#iWn"/></g>
<g transform="translate(1279,118)"><use href="#bT"/><use href="#iLf"/></g><g transform="translate(1319,118)"><use href="#bT"/><use href="#iRt"/></g><g transform="translate(1359,118)"><use href="#bT"/><use href="#iBk"/></g><g transform="translate(1399,118)"><use href="#bT"/><use href="#iS"/></g>
<g transform="translate(1279,158)"><use href="#bT"/><use href="#iEx"/></g><g transform="translate(1319,158)"><use href="#bT"/><use href="#iSh"/></g><g transform="translate(1359,158)"><use href="#bT"/><use href="#i12"/></g><g transform="translate(1399,158)"><use href="#bT"/><use href="#iQ"/></g>
<g transform="translate(1279,198)"><use href="#bT"/><use href="#iTl"/></g><g transform="translate(1319,198)"><use href="#bT"/><use href="#iKy"/></g><g transform="translate(1359,198)"><use href="#bT"/><use href="#iSa"/></g><g transform="translate(1399,198)"><use href="#bT"/><use href="#iSb"/></g>

<g transform="translate(1279,242)"><use href="#bW"/><use href="#a1"/></g><g transform="translate(1319,242)"><use href="#bW"/><use href="#a2"/></g><g transform="translate(1359,242)"><use href="#bW"/><use href="#a3"/></g><g transform="translate(1399,242)"><use href="#bW"/><use href="#a4"/></g>
<g transform="translate(1279,282)"><use href="#bG"/><use href="#b1"/></g><g transform="translate(1319,282)"><use href="#bG"/><use href="#b2"/></g><g transform="translate(1359,282)"><use href="#bG"/><use href="#b3"/></g><g transform="translate(1399,282)"><use href="#bG"/><use href="#b4"/></g>
<g transform="translate(1279,322)"><use href="#bG"/><use href="#c1"/></g><g transform="translate(1319,322)"><use href="#bG"/><use href="#c2"/></g><g transform="translate(1359,322)"><use href="#bG"/><use href="#c3"/></g><g transform="translate(1399,322)"><use href="#bG"/><use href="#c4"/></g>
<g transform="translate(1279,362)"><use href="#bG"/><use href="#d1"/></g><g transform="translate(1319,362)"><use href="#bG"/><use href="#d2"/></g><g transform="translate(1359,362)"><use href="#bG"/><use href="#d3"/></g><g transform="translate(1399,362)"><use href="#bG"/><use href="#d4"/></g>
<g transform="translate(1279,402)"><use href="#bG"/><use href="#e1"/></g><g transform="translate(1319,402)"><use href="#bG"/><use href="#e2"/></g><g transform="translate(1359,402)"><use href="#bG"/><use href="#e3"/></g><g transform="translate(1399,402)"><use href="#bG"/><use href="#e4"/></g>
<g transform="translate(1279,442)"><use href="#bO"/><use href="#f0"/></g><g transform="translate(1319,442)"><use href="#bO"/><use href="#f1"/></g><g transform="translate(1359,442)"><use href="#bO"/><use href="#f2"/></g><g transform="translate(1399,442)"><use href="#bO"/><use href="#f3"/></g>
</g>
<rect x="1277" y="481" width="163" height="4" fill="#3f6f62"/>
<rect x="1276.500" y="485" width="1.500" height="253" fill="#3f7a70"/>
<!-- minimap -->
<rect x="1278" y="536.500" width="162" height="148" fill="#fb0000" stroke="#a86000" stroke-width="1"/>
<path d="M1296.700 543.300H1409V674H1285.700V648.300H1296.700V643.300H1300.700V638.300H1296.700V630H1285.700V604H1296.700V599.300H1300.700V595H1296.700V586.700H1285.700V560H1296.700V556.700H1300.700V551H1296.700V543.300Z" fill="none" stroke="#40d0d0" stroke-width="1.700"/>
<path d="M1409 674H1285.700V648.300H1296.700M1285.700 630V604H1296.700M1285.700 586.700V560" fill="none" stroke="#909090" stroke-width="1.700"/>
<path d="M1282 671L1290 679M1290 671L1282 679" stroke="#40e0e0"/>
<rect x="1277" y="735" width="163" height="46" fill="#53cdb0"/>
<rect x="1277" y="735" width="163" height="2" fill="#3f6f62"/><rect x="1277" y="735" width="1.500" height="46" fill="#3f7a70"/>
<text class="m" x="1281" y="755" style="font-size:14px;letter-spacing:.6px">X = 1.858325"</text>
<text class="m" x="1281" y="771" style="font-size:14px;letter-spacing:.6px">Y = 5.487296"</text>

<!-- bottom bar -->
<rect x="0" y="782" width="1440" height="36" fill="#000"/>
<rect x="0" y="783" width="1360" height="32" fill="#ffffd8"/>
<g fill="none"><rect x="1.500" y="783.500" width="30" height="29" stroke="#fff"/><rect x="4" y="786" width="25" height="24" stroke="#b8b890" stroke-width="2"/><rect x="7" y="789" width="19" height="18" stroke="#000"/><path d="M10 791L24 805M24 799V805H18" stroke="#000" stroke-width="1.200"/></g>
<g fill="none"><rect x="33.500" y="783.500" width="30" height="29" stroke="#fff"/><rect x="36" y="786" width="25" height="24" stroke="#b8b890" stroke-width="2"/><rect x="39" y="789" width="19" height="18" stroke="#000"/><path d="M40 805L52 790M40 805H55" stroke="#000" stroke-width="1.200"/><text x="50" y="804" font-size="7" fill="#000" font-family="Liberation Mono" font-weight="bold">ax</text></g>
<rect x="66" y="783" width="28" height="30" fill="#53b9a0"/><rect x="69" y="786" width="22" height="24" fill="#ffffd8" stroke="#b8b890"/><g fill="none" stroke="#000"><rect x="72.500" y="790.500" width="15" height="15"/><path d="M72 798H88M80 790V806"/></g>
<text class="m" x="98" y="803" style="font-size:12.500px;letter-spacing:.3px">X Y :</text>
<rect x="143" y="783" width="1" height="32" fill="#000"/><rect x="144" y="784" width="172" height="30" fill="#fff"/><rect x="147" y="787" width="167" height="25" fill="#ffffd8" stroke="#b8b890" stroke-width="2"/><path d="M151 790v12" stroke="#000" stroke-dasharray="1 1"/><path d="M149 790h4M149 802h4" stroke="#000" stroke-width=".7"/>
<rect x="316" y="783" width="2" height="32" fill="#000"/><rect x="318" y="783" width="29" height="30" fill="#53b9a0"/><rect x="321" y="786" width="23" height="24" fill="#ffffd8" stroke="#b8b890"/><rect x="324.500" y="789.500" width="15" height="18" fill="none" stroke="#000"/><text x="332" y="804" text-anchor="middle" font-size="14" font-family="Liberation Sans">!</text>
<rect x="347" y="783" width="1.500" height="32" fill="#000"/>
<text class="m" x="352" y="802" style="font-size:11.670px">&lt;M1&gt; - Select first area corner</text>
<rect x="1360" y="783" width="80" height="33" fill="#53cdb0" stroke="#000" stroke-width=".5"/>
<rect x="1366" y="785" width="71" height="29" fill="#9ee8d8"/><path d="M1437 785V814H1366L1368 812H1435V787Z" fill="#2f6a5c"/><rect x="1368" y="787" width="67" height="25" fill="#53cdb0"/>
<text class="m" x="1373" y="803" style="font-size:14.500px;font-weight:normal;stroke:#000;stroke-width:.35">Inch</text>
<rect x="1417" y="796" width="11" height="5" fill="#9edcdc" stroke="#2f6a5c"/>
<!-- status -->
<rect x="0" y="816" width="1440" height="32" fill="#3a7a70"/>
<rect x="2" y="818" width="1435" height="28" fill="#e8ffff"/><path d="M1437 818V846H2L4 844H1435V820Z" fill="#3a7a70"/><rect x="4" y="820" width="1431" height="24" fill="#b2ffff"/>
<rect x="0" y="848" width="1440" height="3" fill="#d4d0c8"/>
<text class="m" x="639" y="835" style="font-size:12px;letter-spacing:0">DX=0.0001,I</text>

<!-- Popview 2 -->
<g>
<rect x="225" y="183" width="301" height="362" fill="#d4d0c8"/><rect x="225" y="183" width="301" height="1.500" fill="#fff"/><rect x="225" y="183" width="1.500" height="362" fill="#fff"/><rect x="525" y="183" width="1" height="362" fill="#404040"/><rect x="225" y="544" width="301" height="1" fill="#404040"/>
<rect x="228" y="186" width="295" height="20" fill="url(#tg)"/>
<rect x="231" y="189" width="14" height="14" fill="#fff" stroke="#444" stroke-width=".5"/><rect x="231" y="189" width="14" height="3" fill="#101060"/><path d="M234 194L242 202M242 194L234 202" stroke="#b8a800" stroke-width="2"/>
<text class="t" x="248" y="199" fill="#d8d8d8">Popview - 2</text>
<rect x="506" y="188" width="15" height="14" fill="#d4d0c8" stroke="#555" stroke-width=".6"/><path d="M510 191L517 199M517 191L510 199" stroke="#000" stroke-width="1.500"/>
<rect x="228" y="206" width="295" height="336" fill="#2f6a5c"/>
<rect x="485" y="206" width="2" height="307" fill="#cdf3f3"/><rect x="230" y="511" width="257" height="2" fill="#cdf3f3"/>
<rect x="232" y="208" width="252" height="301" fill="#000"/>
<rect x="232" y="256" width="100" height="79" fill="#449600"/>
<path d="M232 388H316L319 391V397L322.500 403V420L319 424V495L322.500 499V509H232Z" fill="#449600"/>
<rect x="330" y="208" width="12" height="301" fill="#fb0000"/>
<rect x="330" y="256" width="2" height="79" fill="#449600"/>
<rect x="332" y="258" width="4.500" height="56" fill="#b89a00"/>
<ellipse cx="338" cy="301" rx="29" ry="59" fill="none" stroke="#c8107a" stroke-width="1.500"/>
<rect x="488" y="207" width="35" height="243" fill="#2f6a5c"/>
<rect x="488" y="450" width="35" height="62" fill="#53cdb0"/>
<g transform="translate(489,207.500) scale(.87,.88)"><use href="#p0"/></g>
<g transform="translate(489,242.500) scale(.87,.88)"><use href="#p1"/></g>
<g transform="translate(489,277.500) scale(.87,.88)"><use href="#p2"/></g>
<g transform="translate(489,312.500) scale(.87,.88)"><use href="#p3"/></g>
<g transform="translate(489,347.500) scale(.87,.88)"><use href="#p4"/></g>
<g transform="translate(489,382.500) scale(.87,.88)"><use href="#p5"/></g>
<g transform="translate(489,417.500) scale(.87,.88)"><use href="#p6"/></g>
<rect x="229" y="514" width="293" height="26" fill="#cdf3f3"/><path d="M522 514V540H229L231 538H520V516Z" fill="#3f7a70"/><rect x="231" y="516" width="289" height="22" fill="#9edcdc"/>
<text class="m" x="375" y="532" text-anchor="middle" style="font-size:14px;font-weight:normal;stroke:#000;stroke-width:.35;letter-spacing:.3px">Close</text>
</g>

<!-- Popview 1 -->
<g>
<rect x="683" y="138" width="391" height="426" fill="#d4d0c8"/><rect x="683" y="138" width="391" height="1.500" fill="#fff"/><rect x="683" y="138" width="1.500" height="426" fill="#fff"/><rect x="1073" y="138" width="1" height="426" fill="#404040"/><rect x="683" y="563" width="391" height="1" fill="#404040"/>
<rect x="686" y="141" width="385" height="20" fill="url(#tg)"/>
<rect x="688" y="144" width="14" height="14" fill="#fff" stroke="#444" stroke-width=".5"/><rect x="688" y="144" width="14" height="3" fill="#101060"/><path d="M691 149L699 157M699 149L691 157" stroke="#b8a800" stroke-width="2"/>
<text class="t" x="705" y="155" fill="#d8d8d8">Popview - 1</text>
<rect x="1054" y="144" width="15" height="13" fill="#d4d0c8" stroke="#555" stroke-width=".6"/><path d="M1058 147L1065 154M1065 147L1058 154" stroke="#000" stroke-width="1.500"/>
<rect x="686" y="161" width="385" height="400" fill="#2f6a5c"/>
<rect x="1032" y="161" width="2" height="371" fill="#cdf3f3"/><rect x="686" y="529" width="348" height="3" fill="#cdf3f3"/>
<rect x="689" y="165" width="342" height="363" fill="#000"/>
<path d="M865 165H1031V234H997L990 238H978L970 234H870L865 229Z" fill="#449600"/>
<rect x="855" y="283" width="176" height="75" fill="#449600"/>
<path d="M865 528V412L870 407H903L908 403H925L930 407H1015L1020 402H1031V528Z" fill="#449600"/>
<rect x="843" y="165" width="12" height="363" fill="#fb0000"/>
<rect x="849" y="292" width="6" height="53" fill="#b89a00"/>
<ellipse cx="847" cy="316" rx="26.500" ry="55" fill="none" stroke="#c8107a" stroke-width="1.500"/>
<rect x="1035" y="162" width="35" height="245" fill="#2f6a5c"/>
<rect x="1035" y="407" width="35" height="125" fill="#53cdb0"/>
<g transform="translate(1036,163.500) scale(.87,.88)"><use href="#p0"/></g>
<g transform="translate(1036,198.500) scale(.87,.88)"><use href="#p1"/></g>
<g transform="translate(1036,233.500) scale(.87,.88)"><use href="#p2"/></g>
<g transform="translate(1036,268.500) scale(.87,.88)"><use href="#p3"/></g>
<g transform="translate(1036,303.500) scale(.87,.88)"><use href="#p4"/></g>
<g transform="translate(1036,338.500) scale(.87,.88)"><use href="#p5"/></g>
<g transform="translate(1036,373.500) scale(.87,.88)"><use href="#p6"/></g>
<rect x="687" y="533" width="382" height="27" fill="#cdf3f3"/><path d="M1069 533V560H687L689 558H1067V535Z" fill="#3f7a70"/><rect x="689" y="535" width="378" height="23" fill="#9edcdc"/>
<text class="m" x="878" y="551" text-anchor="middle" style="font-size:14px;font-weight:normal;stroke:#000;stroke-width:.35;letter-spacing:.3px">Close</text>
</g>

<!-- note -->
<rect x="711" y="733" width="369" height="116" fill="#fff"/>
<text class="n" x="717" y="757">圈圈内的均需按必须漏铜制作，现在</text>
<text class="n" x="717" y="778">只做了中间的一部分！</text>

<!-- arrows -->
<g filter="url(#sh)">
<path d="M343 300L568 763" stroke="#e8e800" stroke-width="4.500" stroke-linecap="round" fill="none"/>
<path d="M859 316L593 763" stroke="#e8e800" stroke-width="4.500" stroke-linecap="round" fill="none"/>
<path d="M574 777L551 755L564.500 757L571 745Z" fill="#e8e800"/>
<path d="M585 777L591 746L596 758L610 757Z" fill="#e8e800"/>
</g>
</svg>
</body></html>
